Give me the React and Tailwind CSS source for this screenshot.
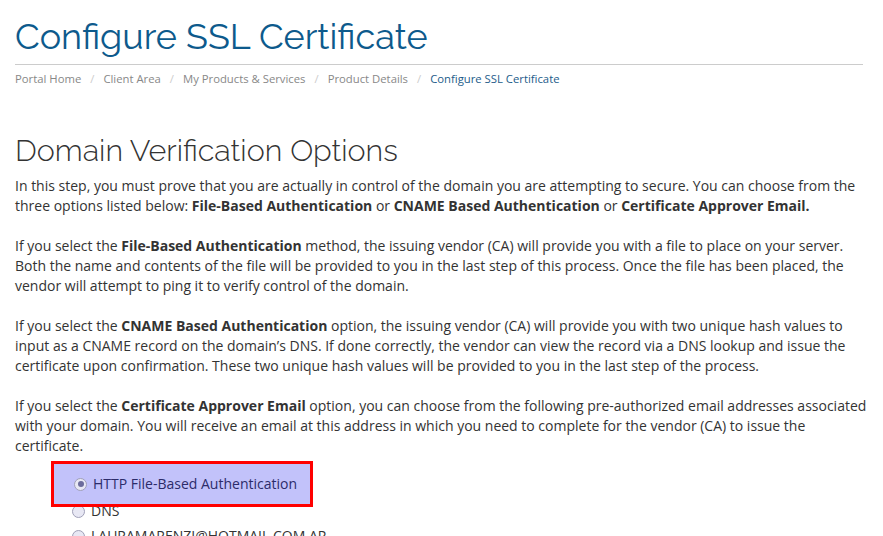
export default function App() {
  const crumbs = ["Portal Home", "Client Area", "My Products & Services", "Product Details"];

  return (
    <div className="min-h-screen bg-white px-[15px] text-[#333] font-['Open_Sans',sans-serif]">
      <div className="w-[848px]">
        <h1 className="pt-[14px] pb-[6px] text-[36px] leading-[44px] font-['Raleway','Lato',sans-serif] text-[#0d5a8c] border-b border-[#cccccc]">
          Configure SSL Certificate
        </h1>
        <nav className="flex items-center h-[29px] text-[11.3px] text-[#888]">
          {crumbs.map((c) => (
            <span key={c} className="flex items-center">
              <span>{c}</span>
              <span className="px-[9px] text-[#ccc]">/</span>
            </span>
          ))}
          <span className="text-[#1d5c8a]">Configure SSL Certificate</span>
        </nav>

        <h2 className="mt-[36px] text-[30.5px] leading-[40px] font-['Raleway','Lato',sans-serif] font-light text-[#333]">
          Domain Verification Options
        </h2>

        <div className="mt-[6px] text-[14px] leading-[20px] w-[852px]">
          <p className="mb-[20px]">
            In this step, you must prove that you are actually in control of the domain you are attempting to secure. You can choose from the three options listed below: <b>File-Based Authentication</b> or <b>CNAME Based Authentication</b> or <b>Certificate Approver Email.</b>
          </p>
          <p className="mb-[20px]">
            If you select the <b>File-Based Authentication</b> method, the issuing vendor (CA) will provide you with a file to place on your server. Both the name and contents of the file will be provided to you in the last step of this process. Once the file has been placed, the vendor will attempt to ping it to verify control of the domain.
          </p>
          <p className="mb-[20px]">
            If you select the <b>CNAME Based Authentication</b> option, the issuing vendor (CA) will provide you with two unique hash values to input as a CNAME record on the domain’s DNS. If done correctly, the vendor can view the record via a DNS lookup and issue the certificate upon confirmation. These two unique hash values will be provided to you in the last step of the process.
          </p>
          <p>
            If you select the <b>Certificate Approver Email</b> option, you can choose from the following pre-authorized email addresses associated with your domain. You will receive an email at this address in which you need to complete for the vendor (CA) to issue the certificate.
          </p>
        </div>

        <div className="mt-[5px] ml-[36px] flex flex-col text-[14px] leading-[20px]">
          <div className="relative z-10 w-[262px] h-[46px] border-[3px] border-[#ff0000] bg-[#c2c2fa] flex items-center pl-[20px] whitespace-nowrap">
            <Radio checked />
            <span className="ml-[6px] text-[#2c2c6a]">HTTP File-Based Authentication</span>
          </div>
          <div className="flex items-center pl-[21px] h-[20px] -mt-[6px] whitespace-nowrap">
            <Radio />
            <span className="ml-[6px] text-[#333]">DNS</span>
          </div>
          <div className="flex items-center pl-[21px] h-[20px] mt-[5px] whitespace-nowrap">
            <Radio />
            <span className="ml-[6px] text-[#333]">LAURAMARENZI@HOTMAIL.COM.AR</span>
          </div>
        </div>
      </div>
    </div>
  );
}

function Radio({ checked = false }) {
  return (
    <span className="w-[13px] h-[13px] rounded-full border border-[#a0a0b8] bg-[#e8e8f4] flex items-center justify-center shrink-0">
      {checked && <span className="w-[6px] h-[6px] rounded-full bg-[#6c6c9c]" />}
    </span>
  );
}
